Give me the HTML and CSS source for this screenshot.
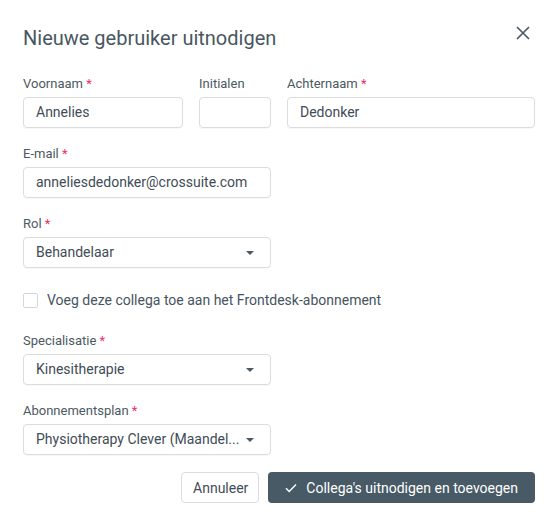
FILE: index.html
```html
<!DOCTYPE html>
<html lang="nl">
<head>
<meta charset="utf-8">
<title>Nieuwe gebruiker uitnodigen</title>
<link rel="stylesheet" href="styles.css">
</head>
<body>
<div class="dialog">
  <div class="header">
    <h1 class="title">Nieuwe gebruiker uitnodigen</h1>
    <button class="close" aria-label="Sluiten">
      <svg width="14" height="14" viewBox="0 0 14 14"><path d="M1 1L13 13M13 1L1 13" stroke="#4a5a66" stroke-width="1.7" fill="none"/></svg>
    </button>
  </div>
  <form class="form">
    <div class="row">
      <div class="field">
        <label class="label">Voornaam <span class="req">*</span></label>
        <div class="input">Annelies</div>
      </div>
      <div class="field">
        <label class="label">Initialen</label>
        <div class="input"></div>
      </div>
      <div class="field">
        <label class="label">Achternaam <span class="req">*</span></label>
        <div class="input">Dedonker</div>
      </div>
    </div>
    <div class="field half">
      <label class="label">E-mail <span class="req">*</span></label>
      <div class="input">anneliesdedonker@crossuite.com</div>
    </div>
    <div class="field half">
      <label class="label">Rol <span class="req">*</span></label>
      <div class="input select"><span class="value">Behandelaar</span><span class="caret"></span></div>
    </div>
    <div class="check-row">
      <span class="checkbox"></span>
      <span class="check-text">Voeg deze collega toe aan het Frontdesk-abonnement</span>
    </div>
    <div class="field half">
      <label class="label">Specialisatie <span class="req">*</span></label>
      <div class="input select"><span class="value">Kinesitherapie</span><span class="caret"></span></div>
    </div>
    <div class="field half">
      <label class="label">Abonnementsplan <span class="req">*</span></label>
      <div class="input select"><span class="value">Physiotherapy Clever (Maandel...</span><span class="caret"></span></div>
    </div>
    <div class="actions">
      <button type="button" class="btn btn-secondary">Annuleer</button>
      <button type="button" class="btn btn-primary">
        <svg width="12" height="10" viewBox="0 0 12 10"><path d="M1 5.2L4.2 8.4L11 1.6" stroke="#ffffff" stroke-width="1.4" fill="none"/></svg>
        <span>Collega's uitnodigen en toevoegen</span>
      </button>
    </div>
  </form>
</div>
</body>
</html>
```
FILE: styles.css
```css
* { box-sizing: border-box; }
html, body { margin: 0; padding: 0; background: #ffffff; }
body {
  font-family: Roboto, "Liberation Sans", Arial, sans-serif;
  color: #3f4c56;
}
.dialog {
  width: 557px;
  padding: 26px 22px 0 23px;
}
.header {
  display: flex;
  justify-content: space-between;
  align-items: flex-start;
  margin-bottom: 25px;
}
.title {
  margin: 0;
  font-size: 20px;
  line-height: 24px;
  font-weight: 400;
  color: #485761;
}
.close {
  border: 0;
  background: none;
  padding: 0;
  margin: 0 5px 0 0;
  width: 14px;
  height: 14px;
  display: flex;
}
.form {
  display: flex;
  flex-direction: column;
  gap: 17px;
}
.row {
  display: grid;
  grid-template-columns: 160px 72px 1fr;
  gap: 16px;
}
.field {
  display: flex;
  flex-direction: column;
}
.half { width: 248px; }
.label {
  font-size: 13px;
  line-height: 18px;
  margin-bottom: 4px;
  color: #4b5963;
}
.req { color: #ec2f6a; }
.input {
  height: 31px;
  border: 1px solid #dadcde;
  border-radius: 4px;
  padding: 0 12px;
  font-size: 14px;
  line-height: 29px;
  color: #3f4c56;
  box-shadow: 0 1px 1px rgba(0,0,0,0.03);
  white-space: nowrap;
}
.select {
  display: flex;
  align-items: center;
  justify-content: space-between;
  padding-right: 16px;
}
.value {
  white-space: nowrap;
  min-width: 0;
}
.caret {
  flex: none;
  width: 0;
  height: 0;
  border-left: 4.5px solid transparent;
  border-right: 4.5px solid transparent;
  border-top: 4.5px solid #4a5863;
  margin-left: 8px;
}
.check-row {
  height: 30px;
  display: flex;
  align-items: center;
  gap: 9px;
}
.checkbox {
  width: 15px;
  height: 15px;
  border: 1.5px solid #d3d7da;
  border-radius: 2px;
}
.check-text {
  font-size: 14px;
  color: #46545e;
}
.actions {
  display: flex;
  justify-content: flex-end;
  gap: 9px;
}
.btn {
  height: 31px;
  border-radius: 4px;
  font-family: Roboto, "Liberation Sans", Arial, sans-serif;
  font-size: 14px;
  display: flex;
  align-items: center;
}
.btn-secondary {
  background: #ffffff;
  border: 1px solid #dadcde;
  color: #3f4c56;
  padding: 0 10px 0 11px;
}
.btn-primary {
  background: #475a66;
  border: 0;
  color: #ffffff;
  padding: 0 17px 0 17px;
  gap: 9px;
}
```
